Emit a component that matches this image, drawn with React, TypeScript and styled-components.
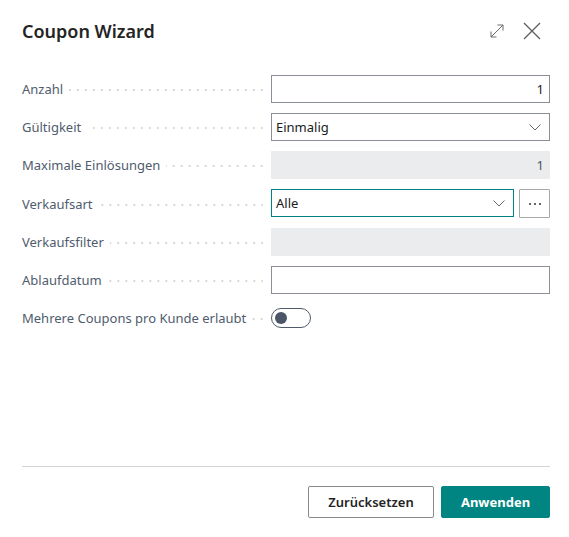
import React from 'react';
import styled, { createGlobalStyle, css } from 'styled-components';

const GlobalStyle = createGlobalStyle`
  html, body {
    margin: 0;
    padding: 0;
    background: #ffffff;
  }
  body {
    font-family: 'Noto Sans', 'Open Sans', sans-serif;
    color: #212121;
  }
`;

const Dialog = styled.div`
  width: 569px;
  height: 537px;
  box-sizing: border-box;
  padding: 0 19px 19px 22px;
  display: flex;
  flex-direction: column;
  background: #ffffff;
`;

const Header = styled.div`
  height: 62px;
  display: flex;
  align-items: center;
  justify-content: space-between;
`;

const Title = styled.h1`
  margin: 0;
  font-size: 18px;
  font-weight: 600;
  color: #242424;
`;

const HeaderActions = styled.div`
  display: flex;
  align-items: center;
  gap: 18px;
  padding-right: 9px;
`;

const IconButton = styled.button`
  border: 0;
  padding: 0;
  background: none;
  display: flex;
  color: #6b6b6b;
  cursor: pointer;
`;

const Form = styled.div`
  flex: 1;
  display: flex;
  flex-direction: column;
  gap: 10px;
  padding-top: 13px;
`;

const Row = styled.div`
  display: grid;
  grid-template-columns: 241px 1fr;
  column-gap: 8px;
  align-items: center;
  min-height: 28px;
`;

const Label = styled.div`
  display: flex;
  align-items: center;
  font-size: 13px;
  color: #505c6d;
  white-space: nowrap;

  &::after {
    content: '';
    flex: 1;
    height: 2px;
    margin-left: 6px;
    margin-top: 2px;
    background-image: linear-gradient(to left, #d6d8db 2px, transparent 2px);
    background-size: 8px 2px;
    background-repeat: repeat-x;
    background-position: right center;
  }
`;

const FieldLine = styled.div`
  display: flex;
  gap: 5px;
`;

const Box = styled.div<{ $variant?: 'normal' | 'focus' | 'disabled'; $align?: 'left' | 'right' }>`
  flex: 1;
  height: 28px;
  box-sizing: border-box;
  display: flex;
  align-items: center;
  justify-content: ${(p) => (p.$align === 'right' ? 'flex-end' : 'space-between')};
  padding: 0 5px 0 4px;
  font-size: 13px;
  color: #1b1b1b;
  border: 1px solid #8a8e96;
  background: #ffffff;

  ${(p) =>
    p.$variant === 'focus' &&
    css`
      border-color: #008284;
    `}

  ${(p) =>
    p.$variant === 'disabled' &&
    css`
      border-color: #ebecee;
      background: #ebecee;
      color: #4a5463;
    `}
`;

const Chevron = styled.svg`
  margin-right: 3px;
`;

const MoreButton = styled.button`
  width: 31px;
  height: 29px;
  box-sizing: border-box;
  border: 1px solid #a8a8a8;
  background: #ffffff;
  border-radius: 1px;
  display: flex;
  align-items: center;
  justify-content: center;
  gap: 3px;
  padding: 0;

  span {
    width: 2px;
    height: 2px;
    background: #333;
    border-radius: 1px;
  }
`;

const Toggle = styled.div`
  width: 40px;
  height: 20px;
  box-sizing: border-box;
  border: 1px solid #4f5a6a;
  border-radius: 10px;
  display: flex;
  align-items: center;
  padding: 0 3px;

  &::before {
    content: '';
    width: 12px;
    height: 12px;
    border-radius: 50%;
    background: #4c5668;
  }
`;

const Footer = styled.div`
  border-top: 1px solid #d4d4d4;
  padding-top: 19px;
  display: flex;
  justify-content: flex-end;
  gap: 7px;
`;

const Button = styled.button<{ $primary?: boolean }>`
  height: 32px;
  width: 126px;
  box-sizing: border-box;
  padding: 0;
  font-family: inherit;
  font-size: 13px;
  font-weight: 600;
  border-radius: 2px;
  cursor: pointer;
  border: 1px solid #8a8a8a;
  background: #ffffff;
  color: #242424;

  ${(p) =>
    p.$primary &&
    css`
      width: 109px;
      border-color: #008582;
      background: #008582;
      color: #ffffff;
      font-weight: 700;
    `}
`;

const ChevronIcon = () => (
  <Chevron width="12" height="7" viewBox="0 0 12 7" fill="none">
    <path d="M0.5 0.5l5.5 5.5 5.5-5.5" stroke="#666" strokeWidth="1" />
  </Chevron>
);

export default function App() {
  return (
    <>
      <GlobalStyle />
      <Dialog>
        <Header>
          <Title>Coupon Wizard</Title>
          <HeaderActions>
            <IconButton aria-label="Maximieren">
              <svg width="16" height="16" viewBox="0 0 16 16" fill="none" stroke="#6b6b6b" strokeWidth="1">
                <path d="M2 14L14 2" />
                <path d="M8.5 2H14V7.5" />
                <path d="M2 8.5V14H7.5" />
              </svg>
            </IconButton>
            <IconButton aria-label="Schließen">
              <svg width="18" height="18" viewBox="0 0 18 18" fill="none" stroke="#5f5f5f" strokeWidth="1.3">
                <path d="M1 1l16 16M17 1L1 17" />
              </svg>
            </IconButton>
          </HeaderActions>
        </Header>

        <Form>
          <Row>
            <Label>Anzahl</Label>
            <Box $align="right">1</Box>
          </Row>
          <Row>
            <Label>Gültigkeit</Label>
            <Box>
              Einmalig
              <ChevronIcon />
            </Box>
          </Row>
          <Row>
            <Label>Maximale Einlösungen</Label>
            <Box $variant="disabled" $align="right">1</Box>
          </Row>
          <Row>
            <Label>Verkaufsart</Label>
            <FieldLine>
              <Box $variant="focus">
                Alle
                <ChevronIcon />
              </Box>
              <MoreButton aria-label="Mehr">
                <span />
                <span />
                <span />
              </MoreButton>
            </FieldLine>
          </Row>
          <Row>
            <Label>Verkaufsfilter</Label>
            <Box $variant="disabled" />
          </Row>
          <Row>
            <Label>Ablaufdatum</Label>
            <Box />
          </Row>
          <Row>
            <Label>Mehrere Coupons pro Kunde erlaubt</Label>
            <Toggle />
          </Row>
        </Form>

        <Footer>
          <Button>Zurücksetzen</Button>
          <Button $primary>Anwenden</Button>
        </Footer>
      </Dialog>
    </>
  );
}
